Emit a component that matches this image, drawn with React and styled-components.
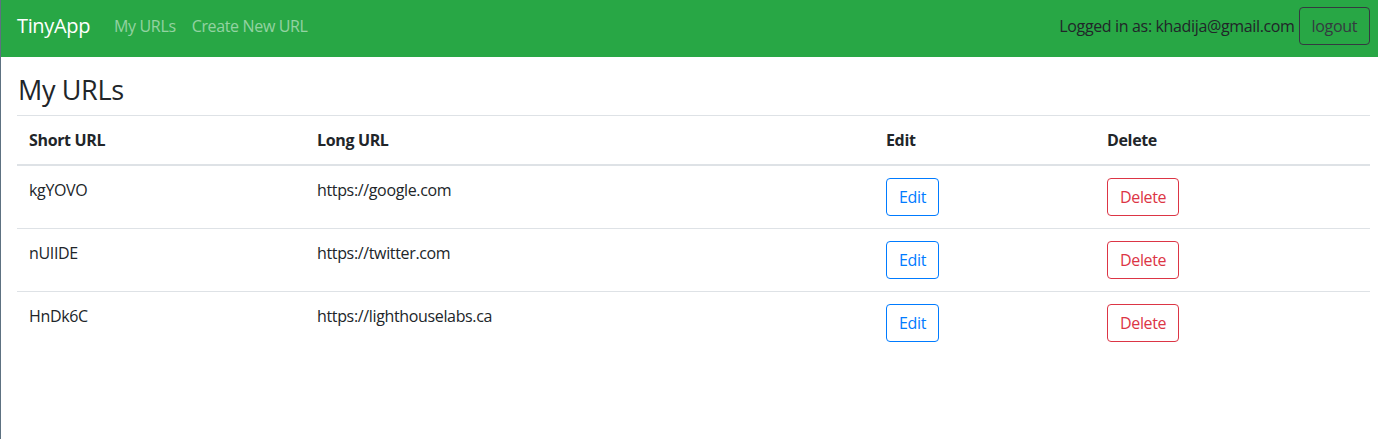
import React from "react";
import styled, { createGlobalStyle } from "styled-components";

const GlobalStyle = createGlobalStyle`
  * {
    box-sizing: border-box;
  }
  body {
    margin: 0;
    background: #fff;
    font-family: "Open Sans", "Noto Sans", Arial, sans-serif;
    font-size: 16px;
    line-height: 1.5;
    letter-spacing: -0.35px;
    color: #212529;
  }
`;

const Page = styled.div`
  min-height: 439px;
  border-left: 1px solid #5d7181;
`;

const Navbar = styled.nav`
  display: flex;
  align-items: center;
  height: 57px;
  padding: 7px 8px 12px 16px;
  background-color: #28a745;
`;

const Brand = styled.a`
  font-size: 20px;
  line-height: 30px;
  color: #fff;
  margin-right: 16px;
  text-decoration: none;
`;

const NavLink = styled.a`
  padding: 8px;
  color: rgba(255, 255, 255, 0.5);
  text-decoration: none;
`;

const NavRight = styled.div`
  margin-left: auto;
  display: flex;
  align-items: center;
  gap: 4px;
`;

const LoggedIn = styled.span`
  color: #212529;
`;

const Button = styled.button`
  font: inherit;
  letter-spacing: inherit;
  line-height: 1.5;
  padding: 6px 12px;
  border-radius: 4px;
  background: transparent;
  border: 1px solid ${({ $color }) => $color};
  color: ${({ $color }) => $color};
  cursor: pointer;
`;

const Main = styled.main`
  padding: 14px 8px 0 16px;
`;

const Title = styled.h2`
  margin: 0 0 6px 1px;
  font-size: 27px;
  font-weight: 500;
  line-height: 38px;
`;

const Table = styled.table`
  width: 100%;
  border-collapse: collapse;
  table-layout: fixed;

  th,
  td {
    padding: 12px;
    text-align: left;
    vertical-align: top;
    border-top: 1px solid #dee2e6;
  }
  th {
    font-weight: 700;
    border-bottom: 2px solid #dee2e6;
  }
`;

const urls = [
  { short: "kgYOVO", long: "https://google.com" },
  { short: "nUIIDE", long: "https://twitter.com" },
  { short: "HnDk6C", long: "https://lighthouselabs.ca" },
];

const App = () => {
  return (
    <Page>
      <GlobalStyle />
      <Navbar>
        <Brand href="#">TinyApp</Brand>
        <NavLink href="#">My URLs</NavLink>
        <NavLink href="#">Create New URL</NavLink>
        <NavRight>
          <LoggedIn>Logged in as: khadija@gmail.com</LoggedIn>
          <Button $color="#343a40">logout</Button>
        </NavRight>
      </Navbar>
      <Main>
        <Title>My URLs</Title>
        <Table>
          <colgroup>
            <col style={{ width: 288 }} />
            <col style={{ width: 569 }} />
            <col style={{ width: 221 }} />
            <col />
          </colgroup>
          <thead>
            <tr>
              <th>Short URL</th>
              <th>Long URL</th>
              <th>Edit</th>
              <th>Delete</th>
            </tr>
          </thead>
          <tbody>
            {urls.map((url) => (
              <tr key={url.short}>
                <td>{url.short}</td>
                <td>{url.long}</td>
                <td>
                  <Button $color="#007bff">Edit</Button>
                </td>
                <td>
                  <Button $color="#dc3545">Delete</Button>
                </td>
              </tr>
            ))}
          </tbody>
        </Table>
      </Main>
    </Page>
  );
};

export default App;
